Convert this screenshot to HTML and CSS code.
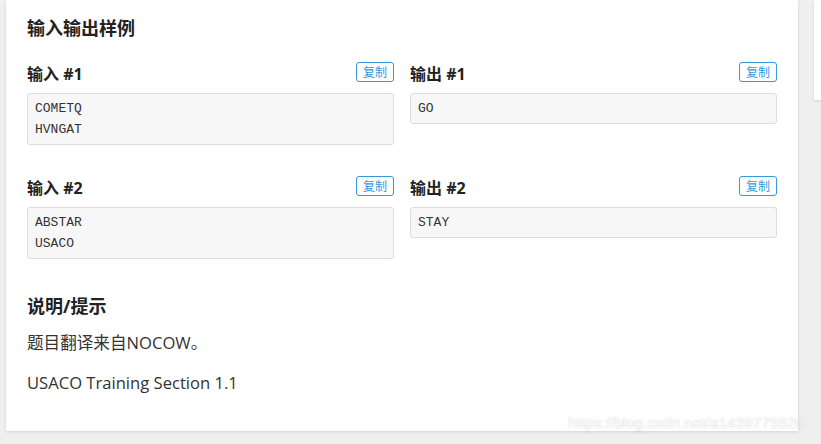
FILE: index.html
```html
<!DOCTYPE html>
<html>
<head>
  <title>输入输出样例</title>
  <meta charset="utf-8">
  <link rel="stylesheet" href="styles.css">
</head>
<body>
  <div id="wrapper">
    <div class="card">
      <h2 class="title">输入输出样例</h2>

      <div class="samples">
        <div class="sample">
          <div class="sample-head">
            <h3>输入 #1</h3>
            <button class="copy">复制</button>
          </div>
          <pre>COMETQ
HVNGAT</pre>
        </div>
        <div class="sample">
          <div class="sample-head">
            <h3>输出 #1</h3>
            <button class="copy">复制</button>
          </div>
          <pre>GO</pre>
        </div>
        <div class="sample">
          <div class="sample-head">
            <h3>输入 #2</h3>
            <button class="copy">复制</button>
          </div>
          <pre>ABSTAR
USACO</pre>
        </div>
        <div class="sample">
          <div class="sample-head">
            <h3>输出 #2</h3>
            <button class="copy">复制</button>
          </div>
          <pre>STAY</pre>
        </div>
      </div>

      <h2 class="title hint">说明/提示</h2>
      <p>题目翻译来自NOCOW。</p>
      <p>USACO Training Section 1.1</p>
    </div>
    <div class="side-card"></div>
  </div>
  <div class="watermark">https://blog.csdn.net/a1439775520</div>
</body>
</html>
```

FILE: styles.css
```css
html, body {
  margin: 0;
  padding: 0;
}
body {
  background-color: #efefef;
  font-family: "Open Sans", "Noto Sans CJK SC", sans-serif;
  color: #262626;
  width: 821px;
  height: 444px;
  overflow: hidden;
  position: relative;
}
#wrapper {
  display: flex;
  align-items: flex-start;
  padding-left: 6px;
}
.card {
  width: 750px;
  height: 417px;
  padding: 14px 21px 0;
  background-color: #fff;
  box-shadow: 0 1px 3px rgba(0, 0, 0, 0.12);
}
.side-card {
  margin-left: 16px;
  width: 20px;
  height: 100px;
  background-color: #fff;
  box-shadow: 0 1px 3px rgba(0, 0, 0, 0.12);
}
.title {
  margin: 0 0 19px;
  font-size: 18px;
  line-height: 28px;
  font-weight: bold;
  color: #222;
}
.title.hint {
  margin: 33px 0 11px;
}
.samples {
  display: grid;
  grid-template-columns: 367px 367px;
  column-gap: 16px;
  row-gap: 30px;
  align-items: start;
}
.sample-head {
  display: flex;
  justify-content: space-between;
  align-items: center;
  height: 24px;
  margin-bottom: 8px;
}
.sample-head h3 {
  margin: 0;
  font-size: 16px;
  line-height: 24px;
  font-weight: bold;
  color: #222;
  position: relative;
  top: 1px;
}
.copy {
  font-family: "Noto Sans CJK SC", sans-serif;
  font-size: 12px;
  line-height: 18px;
  height: 20px;
  padding: 0 6px;
  border: 1px solid #3498db;
  border-radius: 3px;
  background: #fff;
  color: #3498db;
  cursor: pointer;
  position: relative;
  top: -1px;
}
pre {
  margin: 0;
  padding: 4px 7px;
  font-family: "Liberation Mono", monospace;
  font-size: 13px;
  line-height: 21px;
  background-color: #f7f7f7;
  border: 1px solid #ddd;
  border-radius: 3px;
  color: #333;
}
p {
  margin: 0 0 16px;
  font-size: 16.6px;
  line-height: 24px;
  color: #333;
}
.watermark {
  position: absolute;
  left: 568px;
  top: 414px;
  font-family: "Liberation Sans", sans-serif;
  font-size: 15.4px;
  color: rgba(255, 255, 255, 0.85);
  text-shadow: 0 0 2px rgba(0, 0, 0, 0.2);
  white-space: nowrap;
}
```
